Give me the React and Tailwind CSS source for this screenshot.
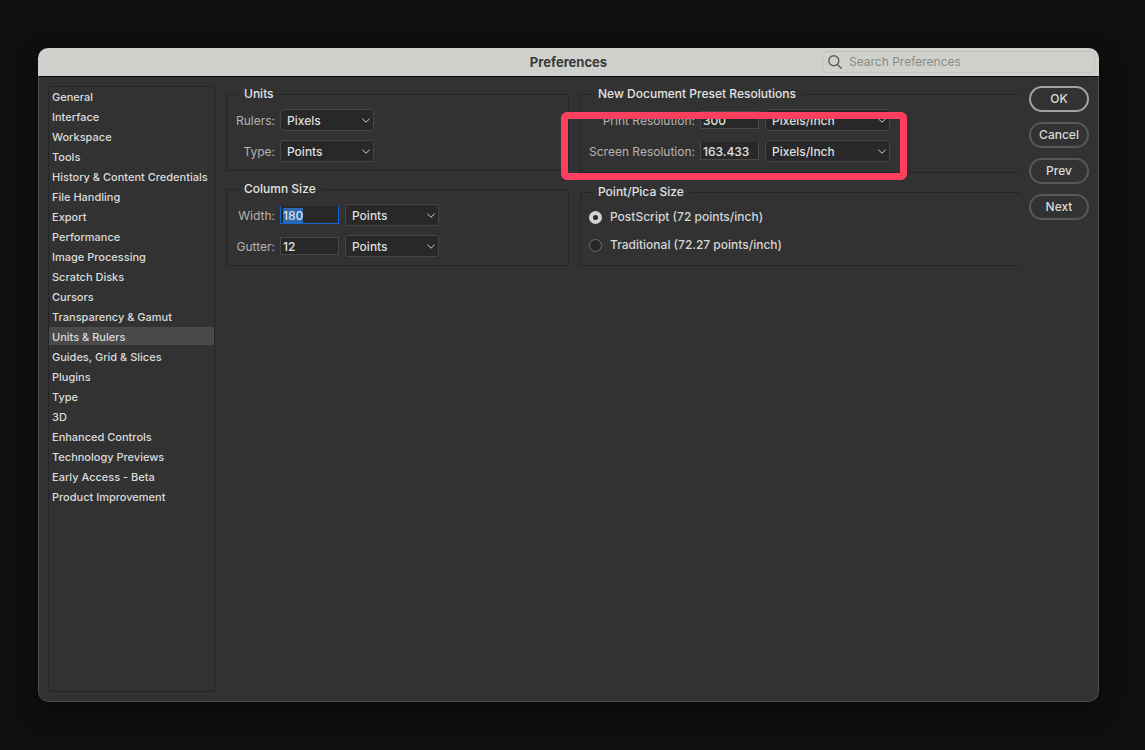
import React, { useEffect, useRef } from "react";
import clsx from "clsx";

const SECTIONS = [
  "General",
  "Interface",
  "Workspace",
  "Tools",
  "History & Content Credentials",
  "File Handling",
  "Export",
  "Performance",
  "Image Processing",
  "Scratch Disks",
  "Cursors",
  "Transparency & Gamut",
  "Units & Rulers",
  "Guides, Grid & Slices",
  "Plugins",
  "Type",
  "3D",
  "Enhanced Controls",
  "Technology Previews",
  "Early Access - Beta",
  "Product Improvement",
];

const UNITS = ["Pixels", "Inches", "Centimeters", "Millimeters", "Points", "Picas"];
const RESOLUTIONS = ["Pixels/Inch", "Pixels/Centimeter"];

const Group = ({ title, className, children }) => (
  <fieldset className={clsx("relative min-w-0 border border-[#262626] pt-[7px]", className)}>
    <legend className="ml-3 px-[5px] text-xs leading-4 font-medium text-[#e2e2e2]">
      {title}
    </legend>
    {children}
  </fieldset>
);

const Row = ({ id, label, wide, children }) => (
  <div className="flex h-[22px] items-center gap-[5px]">
    <label
      htmlFor={id}
      className={clsx(
        "shrink-0 pt-px text-right text-xs whitespace-nowrap text-[#b4b4b4]",
        wide ? "w-[114px]" : "w-12"
      )}
    >
      {label}
    </label>
    <div className="flex items-center gap-[6px]">{children}</div>
  </div>
);

const Select = ({ wide, options, ...props }) => (
  <div className={clsx("relative shrink-0", wide ? "w-[125px]" : "w-[94px]")}>
    <select
      {...props}
      className="block h-[22px] w-full appearance-none rounded-[3px] border border-[#454545] bg-[#282828] pt-px pr-5 pl-[6px] text-xs leading-4 font-medium text-[#dedede] outline-none"
    >
      {options.map((option) => (
        <option key={option}>{option}</option>
      ))}
    </select>
    <svg
      viewBox="0 0 8 5"
      fill="none"
      stroke="#cfcfcf"
      strokeLinecap="round"
      strokeLinejoin="round"
      className="pointer-events-none absolute top-[9px] right-1 h-[5px] w-2"
    >
      <path d="M0.6 1 L4 4.2 L7.4 1" />
    </svg>
  </div>
);

const NumberBox = ({ ref, className, ...props }) => (
  <input
    ref={ref}
    type="text"
    {...props}
    className={clsx(
      "h-[18px] w-[59px] shrink-0 border border-[#484848] bg-[#282828] px-[2px] text-xs leading-4 font-medium text-[#e2e2e2] outline-none selection:bg-[#2b6cb0] selection:text-[#dedede]",
      className
    )}
  />
);

const Radio = ({ id, label, ...props }) => (
  <div className="flex h-[18px] items-center gap-2">
    <input
      id={id}
      type="radio"
      name="pica"
      {...props}
      className="size-[13px] appearance-none rounded-full border border-[#6e6e6e] bg-[#282828] checked:border-4 checked:border-[#d2d2d2]"
    />
    <label htmlFor={id} className="text-xs font-medium text-[#d6d6d6]">
      {label}
    </label>
  </div>
);

const Sidebar = () => (
  <nav className="w-[167px] shrink-0 border border-[#262626]">
    <ul className="flex flex-col gap-[2px]">
      {SECTIONS.map((name) => (
        <li key={name}>
          <button
            type="button"
            className={clsx(
              "block h-[18px] w-full pl-[3px] text-left text-[11px] leading-5 font-medium whitespace-nowrap text-[#dcdcdc]",
              name === "Units & Rulers" && "bg-[#4a4a4a]"
            )}
          >
            {name}
          </button>
        </li>
      ))}
    </ul>
  </nav>
);

const TitleBar = () => (
  <header className="grid h-7 grid-cols-[1fr_auto_1fr] items-center bg-[#cfd1cd]">
    <h1 className="col-start-2 text-[13px] leading-4 font-bold text-[#3a3a3a]">Preferences</h1>
    <div className="relative mr-1 w-[273px] justify-self-end">
      <svg
        viewBox="0 0 14 14"
        fill="none"
        stroke="#5c5e5b"
        strokeWidth="1.4"
        strokeLinecap="round"
        className="pointer-events-none absolute top-1 left-[6px] size-[14px]"
      >
        <circle cx="5.8" cy="5.8" r="5" />
        <path d="M9.5 9.5 L13.2 13.2" />
      </svg>
      <input
        type="search"
        aria-label="Search Preferences"
        placeholder="Search Preferences"
        className="block h-[22px] w-full rounded-[5px] border border-[#c2c4c0] bg-transparent pb-px pl-[26px] text-xs text-[#3a3a3a] outline-none placeholder:text-[#898b88]"
      />
    </div>
  </header>
);

const App = () => {
  const widthRef = useRef(null);

  useEffect(() => {
    widthRef.current.focus();
    widthRef.current.select();
  }, []);

  return (
    <div className="flex min-h-screen flex-col bg-[#0f0f0f] pt-12 pr-[46px] pb-12 pl-[38px] font-['Inter',sans-serif]">
      <div className="flex flex-1 flex-col overflow-hidden rounded-[10px] shadow-[0_8px_24px_rgba(0,0,0,0.4)]">
        <TitleBar />
        <main className="flex flex-1 rounded-b-[10px] border border-t-[#0c0c0c] border-[#4c4c4c] bg-[#323232] p-[9px]">
          <Sidebar />

          <div className="ml-[11px] grid flex-1 grid-cols-[343fr_440fr] items-start gap-[11px]">
            <div className="flex flex-col gap-[10px]">
              <Group title="Units" className="pb-2">
                <div className="flex flex-col gap-[9px]">
                  <Row id="rulers" label="Rulers:">
                    <Select id="rulers" options={UNITS} defaultValue="Pixels" />
                  </Row>
                  <Row id="type" label="Type:">
                    <Select id="type" options={UNITS} defaultValue="Points" />
                  </Row>
                </div>
              </Group>

              <Group title="Column Size" className="pb-2">
                <div className="flex flex-col gap-[9px]">
                  <Row id="width" label="Width:">
                    <NumberBox
                      ref={widthRef}
                      id="width"
                      defaultValue="180"
                      className="focus:border-[#1268d8] focus:border-t-[#282828]"
                    />
                    <Select aria-label="Width unit" options={UNITS} defaultValue="Points" />
                  </Row>
                  <Row id="gutter" label="Gutter:">
                    <NumberBox id="gutter" defaultValue="12" />
                    <Select aria-label="Gutter unit" options={UNITS} defaultValue="Points" />
                  </Row>
                </div>
              </Group>
            </div>

            <div className="flex flex-col gap-[11px]">
              <Group title="New Document Preset Resolutions" className="border-r-0 pb-[10px]">
                <div className="flex flex-col gap-[9px]">
                  <Row id="print" label="Print Resolution:" wide>
                    <NumberBox id="print" defaultValue="300" />
                    <Select
                      aria-label="Print resolution unit"
                      options={RESOLUTIONS}
                      defaultValue="Pixels/Inch"
                      wide
                    />
                  </Row>
                  <Row id="screen" label="Screen Resolution:" wide>
                    <NumberBox id="screen" defaultValue="163.433" className="border-t-[#282828]" />
                    <Select
                      aria-label="Screen resolution unit"
                      options={RESOLUTIONS}
                      defaultValue="Pixels/Inch"
                      wide
                    />
                  </Row>
                </div>
                {/* Callout around the resolution fields */}
                <div className="pointer-events-none absolute -bottom-2 -left-5 h-[68px] w-[346px] rounded-md border-[7px] border-[#ff3e60]"></div>
              </Group>

              <Group title="Point/Pica Size" className="border-r-0 pb-[11px]">
                <div className="flex flex-col gap-[10px] pt-px pl-2">
                  <Radio id="postscript" label="PostScript (72 points/inch)" defaultChecked />
                  <Radio id="traditional" label="Traditional (72.27 points/inch)" />
                </div>
              </Group>
            </div>
          </div>

          <div className="ml-[9px] flex w-[60px] shrink-0 flex-col gap-[10px]">
            {["OK", "Cancel", "Prev", "Next"].map((label) => (
              <button
                key={label}
                type="button"
                className={clsx(
                  "h-[26px] rounded-full border-2 text-xs leading-4 font-medium text-[#dadada]",
                  label === "OK" ? "border-[#a3a3a3]" : "border-[#585858]"
                )}
              >
                {label}
              </button>
            ))}
          </div>
        </main>
      </div>
    </div>
  );
};

export default App;
